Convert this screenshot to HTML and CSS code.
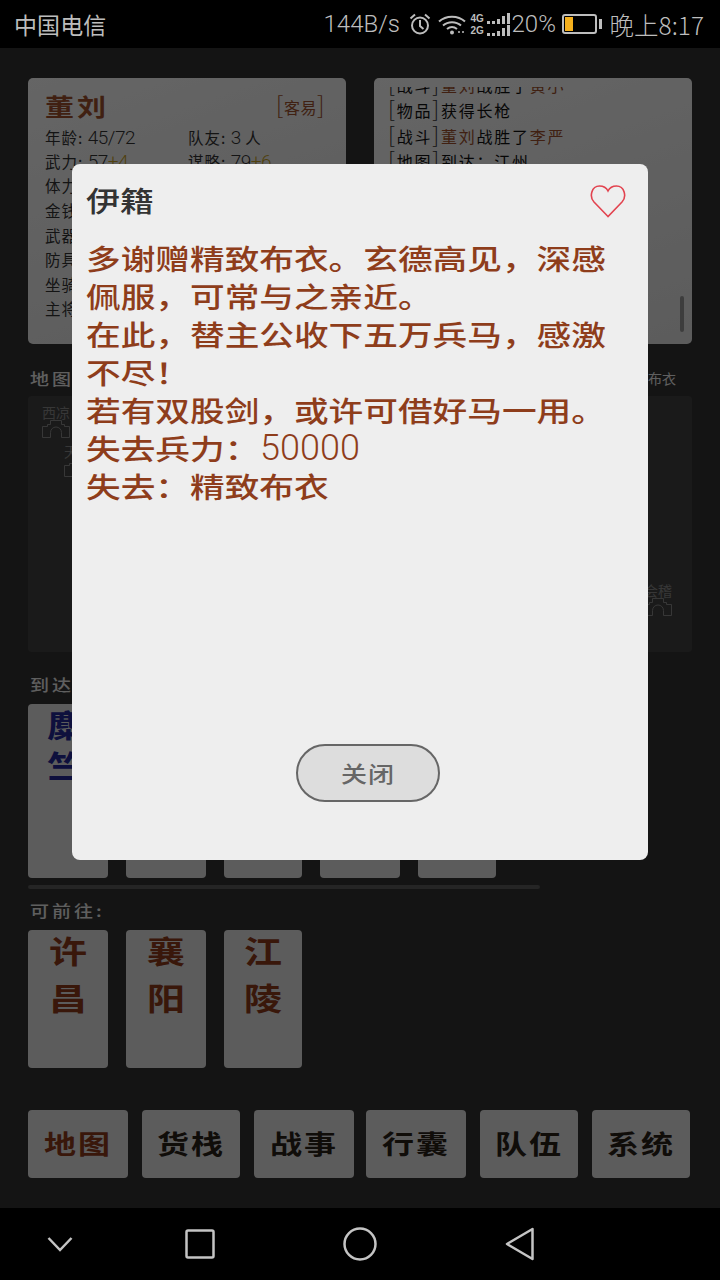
FILE: index.html
```html
<!DOCTYPE html>
<html lang="zh">
<head>
<meta charset="utf-8">
<title>伊籍</title>
<link rel="stylesheet" href="styles.css">
</head>
<body>
<div class="phone">
  <header class="status">
    <span class="carrier">中国电信</span>
    <div class="status-right">
      <span class="speed">144B/s</span>
      <svg class="ic-alarm" viewBox="0 0 24 24" width="24" height="24" fill="none" stroke="#bdbdbd" stroke-width="2"><circle cx="12" cy="13.5" r="8"/><path d="M12 8v6l3.5 3"/><path d="M2.5 6.5 7 2.5M21.5 6.5 17 2.5"/></svg>
      <svg class="ic-wifi" viewBox="0 0 28 24" width="28" height="24" fill="none" stroke="#bdbdbd" stroke-width="2"><path d="M1 9.5C8 3 20 3 27 9.5"/><path d="M5 13.5c5-4.5 13-4.5 18 0"/><path d="M9 17c3-2.500 7-2.500 10 0"/><circle cx="14" cy="20.500" r="2" fill="#bdbdbd" stroke="none"/><path d="M20 20h2M24 20h2" stroke-width="1.500"/></svg>
      <div class="signal">
        <div class="sig-row"><span class="sig-label">4G</span><i class="b1"></i><i class="b2"></i><i class="b3"></i><i class="b4"></i><i class="b5"></i></div>
        <div class="sig-row"><span class="sig-label">2G</span><i class="b1"></i><i class="b2"></i><i class="b3"></i><i class="b4"></i><i class="b5"></i></div>
      </div>
      <span class="pct">20%</span>
      <div class="battery"><div class="battery-fill"></div></div>
      <div class="battery-tip"></div>
      <span class="clock">晚上8:17</span>
    </div>
  </header>

  <main class="game">
    <div class="top-cards">
      <section class="card hero">
        <div class="hero-head"><span class="hero-name"><span class="flat">董刘</span></span><span class="hero-level"><b>[</b>客易<b>]</b></span></div>
        <div class="stat-grid">
          <span>年龄: <em>45/72</em></span><span>队友: <em>3</em> 人</span>
          <span>武力: <em>57<u>+4</u></em></span><span>谋略: <em>79<u>+6</u></em></span>
          <span>体力: <em>100</em></span><span>魅力: <em>80</em></span>
          <span>金钱: <em>1200</em></span><span></span>
          <span>武器: 长枪</span><span></span>
          <span>防具: 布衣</span><span></span>
          <span>坐骑: 无</span><span></span>
          <span>主将: 无</span><span></span>
        </div>
      </section>
      <section class="card log">
        <div class="log-clip">
          <div class="log-lines">
            <p><b>[</b>战斗<b>]</b><span class="red">董刘</span>战胜了<span class="red">黄小</span></p>
            <p><b>[</b>物品<b>]</b>获得长枪</p>
            <p><b>[</b>战斗<b>]</b><span class="red">董刘</span>战胜了<span class="red">李严</span></p>
            <p><b>[</b>地图<b>]</b>到达：江州</p>
          </div>
        </div>
        <div class="scroll-thumb"></div>
      </section>
    </div>

    <div class="map-label"><span class="section-text"><span class="flat">地图</span></span><span class="map-right">布衣</span></div>
    <section class="map">
      <div class="node node-west"><span>西凉</span>
        <svg class="castle" viewBox="0 0 28 18" width="28" height="18" fill="none" stroke="#8a8a8a"><path d="M.5 17.500V6.500h5v-2h3v-4h11v4h3v2h5v11h-8v-5a3 3 0 0 0-11 0v5z"/></svg>
      </div>
      <div class="node node-mid"><span>天</span>
        <svg class="castle" viewBox="0 0 28 18" width="28" height="18" fill="none" stroke="#8a8a8a"><path d="M.5 17.500V6.500h5v-2h3v-4h11v4h3v2h5v11h-8v-5a3 3 0 0 0-11 0v5z"/></svg>
      </div>
      <div class="node node-east"><span>会稽</span>
        <svg class="castle" viewBox="0 0 28 18" width="28" height="18" fill="none" stroke="#8a8a8a"><path d="M.5 17.500V6.500h5v-2h3v-4h11v4h3v2h5v11h-8v-5a3 3 0 0 0-11 0v5z"/></svg>
      </div>
    </section>

    <div class="section-label arrive-label"><span class="flat">到达</span></div>
    <div class="city-row">
      <div class="city city-a blue"><span class="flat">麋</span><span class="flat">竺</span></div>
      <div class="city city-b"></div>
      <div class="city city-c"></div>
      <div class="city city-b city-d"></div>
      <div class="city city-c city-e"></div>
    </div>
    <div class="rule"></div>
    <div class="section-label go-label"><span class="flat">可前往:</span></div>
    <div class="city-row go-row">
      <div class="city city-a"><span class="flat">许</span><span class="flat">昌</span></div>
      <div class="city city-b"><span class="flat">襄</span><span class="flat">阳</span></div>
      <div class="city city-c"><span class="flat">江</span><span class="flat">陵</span></div>
    </div>

    <nav class="tabs">
      <a class="tab wide active"><span class="flat">地图</span></a>
      <a class="tab"><span class="flat">货栈</span></a>
      <a class="tab wide tight"><span class="flat">战事</span></a>
      <a class="tab wide"><span class="flat">行囊</span></a>
      <a class="tab"><span class="flat">队伍</span></a>
      <a class="tab"><span class="flat">系统</span></a>
    </nav>

    <div class="overlay"></div>

    <section class="dialog">
      <div class="dialog-head">
        <span class="dialog-title"><span class="flat">伊籍</span></span>
        <svg class="heart" viewBox="0 0 36 34" width="36" height="34" fill="none" stroke="#e2434f" stroke-width="1.600"><path d="M18 32.500 4 18C-1 12.500 1.500 2 9.500 2c4 0 7 2 8.500 5 1.500-3 4.500-5 8.500-5C34.500 2 37 12.500 32 18z"/></svg>
      </div>
      <div class="dialog-body">
        <div class="line"><span class="flat">多谢赠精致布衣。玄德高见，深感</span></div>
        <div class="line"><span class="flat">佩服，可常与之亲近。</span></div>
        <div class="line"><span class="flat">在此，替主公收下五万兵马，感激</span></div>
        <div class="line"><span class="flat">不尽！</span></div>
        <div class="line"><span class="flat">若有双股剑，或许可借好马一用。</span></div>
        <div class="line"><span class="flat lose">失去兵力：</span><span class="num">50000</span></div>
        <div class="line"><span class="flat">失去：精致布衣</span></div>
      </div>
      <button class="close" type="button"><span class="flat">关闭</span></button>
    </section>
  </main>

  <footer class="navbar">
    <svg viewBox="0 0 28 16" width="28" height="16" fill="none" stroke="#c4c4c4" stroke-width="2.500" class="nav-chev"><path d="M2.500 2 14 14 25.500 2"/></svg>
    <svg viewBox="0 0 30 30" width="30" height="30" fill="none" stroke="#c4c4c4" stroke-width="2.500" class="nav-square"><rect x="1.500" y="1.500" width="27" height="27" rx="1.500"/></svg>
    <svg viewBox="0 0 34 34" width="34" height="34" fill="none" stroke="#c4c4c4" stroke-width="2.500" class="nav-circle"><circle cx="17" cy="17" r="15.500"/></svg>
    <svg viewBox="0 0 30 34" width="30" height="34" fill="none" stroke="#c4c4c4" stroke-width="2.500" stroke-linejoin="round" class="nav-back"><path d="M27.500 2v30L2 17z"/></svg>
  </footer>
</div>
</body>
</html>
```
FILE: styles.css
```css
* { box-sizing: border-box; }
html, body { margin: 0; padding: 0; }
body { font-family: "Noto Sans CJK SC", "Noto Sans", sans-serif; background: #000; }
.phone { width: 720px; height: 1280px; display: flex; flex-direction: column; overflow: hidden; }
.flat { display: inline-block; transform: scaleY(.82); }

/* status bar */
.status { height: 48px; background: #000; color: #bdbdbd; display: flex; align-items: center; justify-content: space-between; padding: 0 16px 0 14px; flex: none; }
.carrier { font-size: 23px; letter-spacing: .1px; }
.status-right { display: flex; align-items: center; font-family: Roboto, "Noto Sans CJK SC", sans-serif; }
.speed { font-size: 24px; font-weight: 300; width: 84px; }
.ic-alarm { margin-right: 6px; }
.ic-wifi { margin-right: 5px; }
.signal { width: 41px; display: flex; flex-direction: column; gap: 1px; }
.sig-row { display: flex; align-items: flex-end; height: 11px; gap: 2px; }
.sig-label { font: 700 10px/11px "Liberation Sans", sans-serif; width: 14px; }
.sig-row i { display: block; width: 3px; background: #bdbdbd; }
.b1 { height: 3px; } .b2 { height: 3px; } .b3 { height: 5px; } .b4 { height: 8px; } .b5 { height: 11px; }
.pct { font-size: 24px; font-weight: 300; margin-left: 0; width: 50px; }
.battery { width: 35px; height: 20px; border: 2px solid #bdbdbd; border-radius: 3px; padding: 1px; }
.battery-fill { width: 8px; height: 100%; background: #f5b01d; }
.battery-tip { width: 3px; height: 10px; background: #bdbdbd; margin-left: 2px; margin-right: 8px; }
.clock { font-size: 24.5px; font-family: "Noto Sans CJK SC", sans-serif; font-weight: 300; }

/* game page (raw colours, dimmed by the overlay) */
.game { position: relative; flex: 1; background: #323232; padding: 30px 28px 0; color: #222; overflow: hidden; }
.top-cards { display: flex; gap: 28px; }
.card { width: 318px; height: 266px; background: linear-gradient(160deg, #fcfcfc, #e6e6e6); border-radius: 5px; position: relative; overflow: hidden; }
.hero { padding: 10px 21px 0 17px; }
.hero-head { display: flex; justify-content: space-between; align-items: center; height: 34px; }
.hero-name { font-size: 29px; font-weight: 700; color: #a0522d; letter-spacing: 3px; }
.hero-level { font-size: 16px; color: #a0522d; letter-spacing: .5px; }
.hero-level b { font-weight: 300; font-size: 24px; line-height: 1; color: #a0522d; }
.log b { font-weight: 300; font-size: 22px; line-height: 1; color: #333; }
.stat-grid { display: grid; grid-template-columns: 143px 1fr; grid-auto-rows: 24.4px; margin-top: 3px; font-size: 15.5px; align-items: center; color: #333; letter-spacing: 1px; }
.stat-grid em { font: 300 19px Roboto, sans-serif; letter-spacing: -.5px; }
.stat-grid u { text-decoration: none; color: #c9a227; }

.log { padding: 9px 0 0 14px; }
.log-clip { height: 170px; overflow: hidden; }
.log-lines { margin-top: -16px; }
.log p { margin: 0; height: 25.4px; line-height: 25.4px; font-size: 16px; letter-spacing: 1.75px; color: #111; white-space: nowrap; }
.log .red { color: #a0522d; }
.scroll-thumb { position: absolute; right: 8px; top: 218px; width: 4px; height: 36px; background: #999; border-radius: 2px; }

.map-label { display: flex; justify-content: space-between; margin-top: 24px; padding: 0 16px 0 2px; height: 20px; line-height: 20px; color: #eee; }
.section-text { font-size: 19px; font-weight: 500; letter-spacing: 3px; }
.map-right { font-size: 14px; }
.map { position: relative; height: 256px; margin-top: 8px; background: #434343; border-radius: 4px; }
.node { position: absolute; display: flex; flex-direction: column; font-size: 14px; line-height: 15px; color: #8a8a8a; align-items: center; }
.node-west { left: 14px; top: 9px; }
.node-mid { left: 36px; top: 48px; align-items: flex-start; }
.node-east { left: 616px; top: 187px; }
.castle { display: block; }

.section-label { font-size: 19px; font-weight: 500; line-height: 20px; color: #eee; letter-spacing: 3px; padding-left: 2px; }
.arrive-label { margin-top: 22px; }
.city-row { display: flex; margin-top: 10px; }
.city { width: 80px; height: 174px; background: #e6e6e6; border-radius: 4px; display: flex; flex-direction: column; align-items: center; font-size: 38px; font-weight: 700; color: #8f3a1a; line-height: 46px; }
.city .flat { margin-top: -1px; }
.go-row .city .flat:first-child { margin-top: -3px; }
.go-row .city .flat:last-child { margin-top: 1px; }
.city.blue { color: #252a9a; align-items: flex-start; padding-left: 19px; line-height: 42px; }
.city-a { margin-right: 18px; }
.city-b { margin-right: 18px; }
.city-c { width: 78px; margin-right: 18px; }
.city-e { margin-right: 0; }
.rule { width: 512px; height: 4px; margin-top: 7px; background: #5c5c5c; border-radius: 2px; }
.go-label { margin-top: 11px; }
.go-row .city { height: 138px; }
.go-row { margin-top: 10px; }

.tabs { display: flex; margin-top: 42px; gap: 14px; }
.tab { width: 98px; height: 68px; padding-bottom: 3px; background: #e6e6e6; border-radius: 4px; display: flex; align-items: center; justify-content: center; font-size: 32px; font-weight: 700; color: #2a2118; letter-spacing: 2px; }
.tab.wide { width: 100px; }
.tab.tight { margin-right: -2px; }
.tab.active { color: #8f3a1a; }

.overlay { position: absolute; inset: 0; background: rgba(0, 0, 0, .6); }

/* dialog */
.dialog { position: absolute; left: 72px; top: 116px; width: 576px; height: 696px; background: #eee; border-radius: 8px; padding: 16px 15px 0 14px; }
.dialog-head { display: flex; justify-content: space-between; align-items: center; height: 42px; padding-right: 7px; }
.dialog-title { font-size: 34px; font-weight: 500; color: #333; line-height: 40px; }
.dialog-body { margin-top: 17px; color: #8e3d1b; }
.line { display: flex; align-items: center; height: 38px; font-size: 34.67px; line-height: 38px; font-weight: 500; white-space: nowrap; }
.num { font: 300 36px/38px Roboto, sans-serif; }
.lose { width: 174px; }
.close { position: absolute; left: 224px; top: 580px; width: 144px; height: 58px; border: 2px solid #666; border-radius: 29px; background: #ddd; color: #666; font: 500 26px/1 "Noto Sans CJK SC", sans-serif; letter-spacing: 1px; padding: 0; }

/* nav */
.navbar { height: 72px; flex: none; background: #000; position: relative; }
.navbar svg { position: absolute; }
.nav-chev { left: 46px; top: 28px; }
.nav-square { left: 185px; top: 21px; }
.nav-circle { left: 343px; top: 19px; }
.nav-back { left: 505px; top: 19px; }
```
